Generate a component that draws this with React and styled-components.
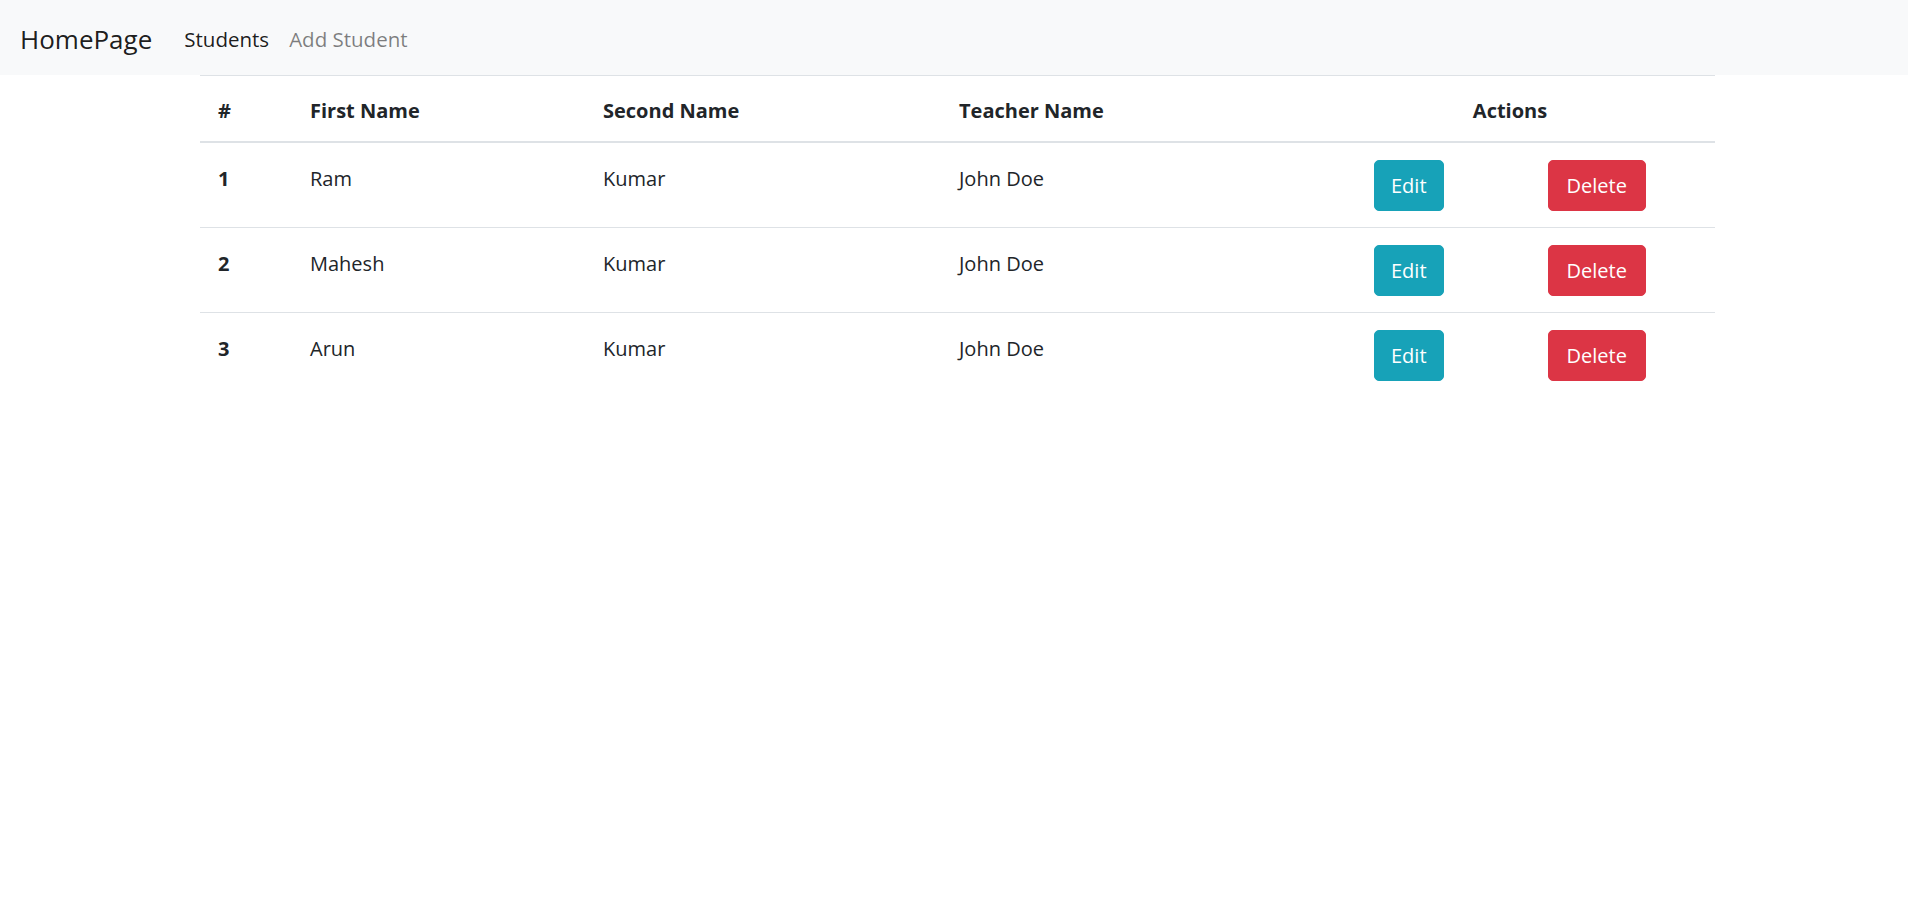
import React from 'react';
import styled, { createGlobalStyle } from 'styled-components';

const GlobalStyle = createGlobalStyle`
	* {
		box-sizing: border-box;
	}
	body {
		margin: 0;
		background: #fff;
		color: #212529;
		font-family: 'Segoe UI', 'Open Sans', 'Noto Sans', sans-serif;
		font-size: 20px;
		line-height: 30px;
	}
`;

const Navbar = styled.nav`
	height: 75px;
	background: #f8f9fa;
	display: flex;
	align-items: center;
	padding: 0 20px;
`;
const Brand = styled.a`
	font-size: 26px;
	line-height: 36px;
	color: rgba(0, 0, 0, 0.9);
	margin-right: 32px;
	padding-top: 2px;
	text-decoration: none;
`;
const NavLinks = styled.div`
	display: flex;
	gap: 20px;
	padding-top: 2px;
`;
const NavLink = styled.a`
	font-size: 20.5px;
	color: ${(p) => (p.$active ? 'rgba(0, 0, 0, 0.9)' : 'rgba(0, 0, 0, 0.5)')};
	text-decoration: none;
`;

const Main = styled.main`
	padding-left: 200px;
`;
const Table = styled.table`
	width: 1515px;
	border-collapse: collapse;
	table-layout: fixed;
`;
const HeadCell = styled.th`
	text-align: ${(p) => (p.$center ? 'center' : 'left')};
	font-weight: 700;
	vertical-align: top;
	padding: 20px 18px 15px;
	border-top: 1px solid #dee2e6;
	border-bottom: 2px solid #dee2e6;
`;
const Cell = styled.td`
	vertical-align: top;
	padding: 21px 18px 0;
	font-weight: ${(p) => (p.$bold ? 700 : 400)};
	border-top: 1px solid #dee2e6;
`;
const ActionCell = styled.td`
	padding: 17px 0 16px 69px;
	border-top: 1px solid #dee2e6;
`;
const Actions = styled.div`
	display: flex;
	align-items: center;
	gap: 104px;
`;
const Button = styled.button`
	height: 51px;
	padding: 0 ${(p) => (p.$tone === 'danger' ? '18px' : '16px')};
	border: 1px solid ${(p) => (p.$tone === 'danger' ? '#dc3545' : '#17a2b8')};
	border-radius: 5px;
	background: ${(p) => (p.$tone === 'danger' ? '#dc3545' : '#17a2b8')};
	color: #fff;
	font-family: inherit;
	font-size: 20px;
	line-height: 30px;
	cursor: pointer;
`;

const students = [
	{ id: 1, first: 'Ram', second: 'Kumar', teacher: 'John Doe' },
	{ id: 2, first: 'Mahesh', second: 'Kumar', teacher: 'John Doe' },
	{ id: 3, first: 'Arun', second: 'Kumar', teacher: 'John Doe' },
];

export default function App() {
	return (
		<>
			<GlobalStyle />
			<Navbar>
				<Brand href="#">HomePage</Brand>
				<NavLinks>
					<NavLink href="#" $active>
						Students
					</NavLink>
					<NavLink href="#">Add Student</NavLink>
				</NavLinks>
			</Navbar>
			<Main>
				<Table>
					<colgroup>
						<col style={{ width: 92 }} />
						<col style={{ width: 293 }} />
						<col style={{ width: 356 }} />
						<col style={{ width: 364 }} />
						<col style={{ width: 205 }} />
						<col style={{ width: 205 }} />
					</colgroup>
					<thead>
						<tr>
							<HeadCell>#</HeadCell>
							<HeadCell>First Name</HeadCell>
							<HeadCell>Second Name</HeadCell>
							<HeadCell>Teacher Name</HeadCell>
							<HeadCell colSpan={2} $center>
								Actions
							</HeadCell>
						</tr>
					</thead>
					<tbody>
						{students.map((s) => (
							<tr key={s.id}>
								<Cell $bold>{s.id}</Cell>
								<Cell>{s.first}</Cell>
								<Cell>{s.second}</Cell>
								<Cell>{s.teacher}</Cell>
								<ActionCell colSpan={2}>
									<Actions>
										<Button>Edit</Button>
										<Button $tone="danger">Delete</Button>
									</Actions>
								</ActionCell>
							</tr>
						))}
					</tbody>
				</Table>
			</Main>
		</>
	);
}
